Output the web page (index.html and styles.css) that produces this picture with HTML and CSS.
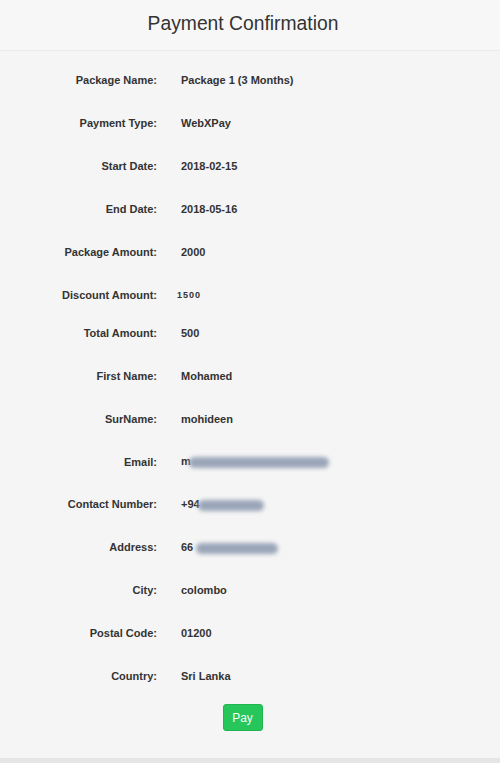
FILE: index.html
```html
<!DOCTYPE html>
<html lang="en">
    <head>
        <meta charset="UTF-8" />
        <meta name="viewport" content="width=device-width, initial-scale=1.0" />
        <title>Payment Confirmation</title>
        <link rel="stylesheet" href="styles.css">
    </head>
    <body>
        <div class="pagina">
            <!-- CABECERA -->
            <header class="cabecera">
                <h1>Payment Confirmation</h1>
            </header>

            <!-- DETALLES DEL PAGO -->
            <div class="detalles">
                <div class="fila"><span class="etiqueta">Package Name:</span><span class="valor">Package 1 (3 Months)</span></div>
                <div class="fila"><span class="etiqueta">Payment Type:</span><span class="valor">WebXPay</span></div>
                <div class="fila"><span class="etiqueta">Start Date:</span><span class="valor">2018-02-15</span></div>
                <div class="fila"><span class="etiqueta">End Date:</span><span class="valor">2018-05-16</span></div>
                <div class="fila"><span class="etiqueta">Package Amount:</span><span class="valor">2000</span></div>
                <div class="fila corta"><span class="etiqueta">Discount Amount:</span><span class="valor pequeno">1500</span></div>
                <div class="fila"><span class="etiqueta">Total Amount:</span><span class="valor">500</span></div>
                <div class="fila"><span class="etiqueta">First Name:</span><span class="valor">Mohamed</span></div>
                <div class="fila"><span class="etiqueta">SurName:</span><span class="valor">mohideen</span></div>
                <div class="fila"><span class="etiqueta">Email:</span><span class="valor">m<span class="oculto correo"></span></span></div>
                <div class="fila"><span class="etiqueta">Contact Number:</span><span class="valor">+94<span class="oculto telefono"></span></span></div>
                <div class="fila"><span class="etiqueta">Address:</span><span class="valor">66 <span class="oculto direccion"></span></span></div>
                <div class="fila"><span class="etiqueta">City:</span><span class="valor">colombo</span></div>
                <div class="fila"><span class="etiqueta">Postal Code:</span><span class="valor">01200</span></div>
                <div class="fila"><span class="etiqueta">Country:</span><span class="valor">Sri Lanka</span></div>
            </div>

            <div class="acciones">
                <button class="pagar">Pay</button>
            </div>
        </div>
        <div class="pie"></div>
    </body>
</html>
```

FILE: styles.css
```css
/* ESTILOS "PAYMENT CONFIRMATION" */
* {
    box-sizing: border-box;
    margin: 0;
    padding: 0;
}

body {
    font-family: "Liberation Sans", Arial, sans-serif;
    color: #333;
    background: #f5f5f5;
}

.pagina {
    height: 758px;
    background: #f5f5f5;
}

.cabecera {
    height: 51px;
    padding: 12px 14px 0 0;
    background: #f7f7f7;
    border-bottom: 1px solid #ebebeb;
}

h1 {
    font-size: 19.3px;
    font-weight: normal;
    line-height: 24px;
    text-align: center;
}

.detalles {
    padding-top: 8px;
}

.fila {
    display: flex;
    align-items: center;
    height: 42.9px;
    font-size: 11px;
    font-weight: bold;
}

.fila.corta {
    height: 38px;
    padding-top: 5px;
}

.etiqueta {
    width: 157px;
    text-align: right;
}

.valor {
    margin-left: 24px;
    white-space: pre;
}

.pequeno {
    margin-left: 20px;
    font-size: 9px;
    letter-spacing: 1px;
}

.oculto {
    display: inline-block;
    height: 11px;
    vertical-align: middle;
    background: #9aa5b8;
    border-radius: 6px;
    filter: blur(2px);
}

.correo {
    width: 140px;
    margin-left: -2px;
}

.telefono {
    width: 66px;
    margin-left: -2px;
}

.direccion {
    width: 82px;
}

.acciones {
    display: flex;
    justify-content: center;
    padding-right: 15px;
    margin-top: 7px;
}

.pagar {
    width: 40px;
    height: 27px;
    font-family: "Liberation Sans", Arial, sans-serif;
    font-size: 12px;
    color: #f4fff6;
    background: #27c65a;
    border: 1px solid #1fb64f;
    border-radius: 3px;
    cursor: pointer;
}

.pie {
    height: 5px;
    background: #e5e5e5;
}
```
